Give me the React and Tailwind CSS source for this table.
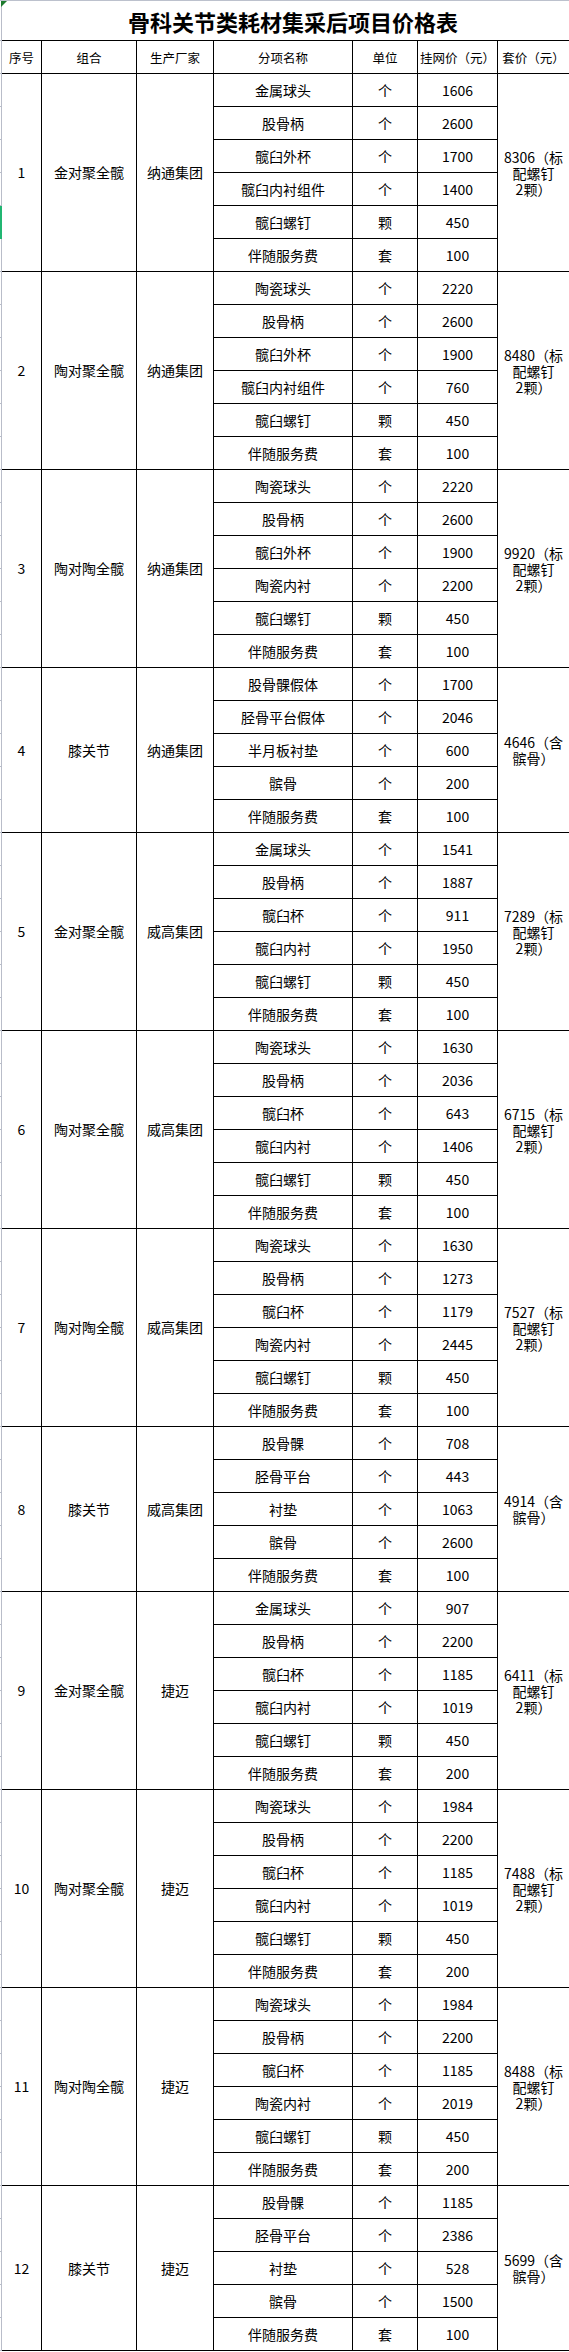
import React from 'react';

const groups = [
  {
    no: '1', combo: '金对聚全髋', maker: '纳通集团', total: ['8306（标', '配螺钉', '2颗）'],
    items: [['金属球头', '个', '1606'], ['股骨柄', '个', '2600'], ['髋臼外杯', '个', '1700'], ['髋臼内衬组件', '个', '1400'], ['髋臼螺钉', '颗', '450'], ['伴随服务费', '套', '100']],
  },
  {
    no: '2', combo: '陶对聚全髋', maker: '纳通集团', total: ['8480（标', '配螺钉', '2颗）'],
    items: [['陶瓷球头', '个', '2220'], ['股骨柄', '个', '2600'], ['髋臼外杯', '个', '1900'], ['髋臼内衬组件', '个', '760'], ['髋臼螺钉', '颗', '450'], ['伴随服务费', '套', '100']],
  },
  {
    no: '3', combo: '陶对陶全髋', maker: '纳通集团', total: ['9920（标', '配螺钉', '2颗）'],
    items: [['陶瓷球头', '个', '2220'], ['股骨柄', '个', '2600'], ['髋臼外杯', '个', '1900'], ['陶瓷内衬', '个', '2200'], ['髋臼螺钉', '颗', '450'], ['伴随服务费', '套', '100']],
  },
  {
    no: '4', combo: '膝关节', maker: '纳通集团', total: ['4646（含', '髌骨）'],
    items: [['股骨髁假体', '个', '1700'], ['胫骨平台假体', '个', '2046'], ['半月板衬垫', '个', '600'], ['髌骨', '个', '200'], ['伴随服务费', '套', '100']],
  },
  {
    no: '5', combo: '金对聚全髋', maker: '威高集团', total: ['7289（标', '配螺钉', '2颗）'],
    items: [['金属球头', '个', '1541'], ['股骨柄', '个', '1887'], ['髋臼杯', '个', '911'], ['髋臼内衬', '个', '1950'], ['髋臼螺钉', '颗', '450'], ['伴随服务费', '套', '100']],
  },
  {
    no: '6', combo: '陶对聚全髋', maker: '威高集团', total: ['6715（标', '配螺钉', '2颗）'],
    items: [['陶瓷球头', '个', '1630'], ['股骨柄', '个', '2036'], ['髋臼杯', '个', '643'], ['髋臼内衬', '个', '1406'], ['髋臼螺钉', '颗', '450'], ['伴随服务费', '套', '100']],
  },
  {
    no: '7', combo: '陶对陶全髋', maker: '威高集团', total: ['7527（标', '配螺钉', '2颗）'],
    items: [['陶瓷球头', '个', '1630'], ['股骨柄', '个', '1273'], ['髋臼杯', '个', '1179'], ['陶瓷内衬', '个', '2445'], ['髋臼螺钉', '颗', '450'], ['伴随服务费', '套', '100']],
  },
  {
    no: '8', combo: '膝关节', maker: '威高集团', total: ['4914（含', '髌骨）'],
    items: [['股骨髁', '个', '708'], ['胫骨平台', '个', '443'], ['衬垫', '个', '1063'], ['髌骨', '个', '2600'], ['伴随服务费', '套', '100']],
  },
  {
    no: '9', combo: '金对聚全髋', maker: '捷迈', total: ['6411（标', '配螺钉', '2颗）'],
    items: [['金属球头', '个', '907'], ['股骨柄', '个', '2200'], ['髋臼杯', '个', '1185'], ['髋臼内衬', '个', '1019'], ['髋臼螺钉', '颗', '450'], ['伴随服务费', '套', '200']],
  },
  {
    no: '10', combo: '陶对聚全髋', maker: '捷迈', total: ['7488（标', '配螺钉', '2颗）'],
    items: [['陶瓷球头', '个', '1984'], ['股骨柄', '个', '2200'], ['髋臼杯', '个', '1185'], ['髋臼内衬', '个', '1019'], ['髋臼螺钉', '颗', '450'], ['伴随服务费', '套', '200']],
  },
  {
    no: '11', combo: '陶对陶全髋', maker: '捷迈', total: ['8488（标', '配螺钉', '2颗）'],
    items: [['陶瓷球头', '个', '1984'], ['股骨柄', '个', '2200'], ['髋臼杯', '个', '1185'], ['陶瓷内衬', '个', '2019'], ['髋臼螺钉', '颗', '450'], ['伴随服务费', '套', '200']],
  },
  {
    no: '12', combo: '膝关节', maker: '捷迈', total: ['5699（含', '髌骨）'],
    items: [['股骨髁', '个', '1185'], ['胫骨平台', '个', '2386'], ['衬垫', '个', '528'], ['髌骨', '个', '1500'], ['伴随服务费', '套', '100']],
  },
];

const headers = ['序号', '组合', '生产厂家', '分项名称', '单位', '挂网价（元）', '套价（元）'];

const cell = 'bg-white flex items-center justify-center text-center';

export default function App() {
  const rowCount = groups.reduce((n, g) => n + g.items.length, 0);

  return (
    <div
      className="relative w-[569px] h-[2352px] bg-white border-t border-[#bcc1cd] text-black"
      style={{ fontFamily: '"Noto Sans CJK SC", sans-serif' }}
    >
      {/* excel corner marker */}
      <svg className="absolute left-px top-0 w-[6px] h-[6px]" viewBox="0 0 6 6">
        <polygon points="0,0 6,0 0,6" fill="#1d7a2e" />
      </svg>

      <div className="flex">
        {/* row-header gutter */}
        <div className="w-[2px] flex flex-col">
          <div className="h-[40px] border-r border-b border-[#b9bdc9]" />
          <div className="h-[33px] border-r border-b border-[#b9bdc9]" />
          {Array.from({ length: rowCount }).map((_, i) => (
            <div
              key={i}
              className={
                i === 4
                  ? 'h-[33px] bg-[#21b672] border-b border-[#21b672]'
                  : 'h-[33px] border-r border-b border-[#b9bdc9]'
              }
            />
          ))}
        </div>

        <div className="flex-1">
          <div className="h-[39px] flex items-center justify-center pl-[15px] text-[22px] font-bold leading-none">
            骨科关节类耗材集采后项目价格表
          </div>

          <div className="grid grid-cols-[39px_94px_76px_138px_64px_79px_71px] auto-rows-[32px] gap-px bg-black py-px">
            {headers.map((h) => (
              <div key={h} className={`${cell} text-[12.5px] pt-[2px]`}>
                {h}
              </div>
            ))}

            {groups.map((g) => {
              const span = g.items.length === 6 ? 'row-span-6' : 'row-span-5';
              return (
                <React.Fragment key={g.no}>
                  <div className={`${cell} ${span} text-[14px]`}>{g.no}</div>
                  <div className={`${cell} ${span} text-[14px]`}>{g.combo}</div>
                  <div className={`${cell} ${span} text-[14px]`}>{g.maker}</div>
                  <div className={`${cell} text-[14px] pt-px`}>{g.items[0][0]}</div>
                  <div className={`${cell} text-[14px] pt-px`}>{g.items[0][1]}</div>
                  <div className={`${cell} text-[14px] pt-px`}>{g.items[0][2]}</div>
                  <div className={`${cell} ${span} flex-col px-[6px] text-[14px] leading-[16px]`}>
                    {g.total.map((t) => (
                      <span key={t} className="whitespace-nowrap">{t}</span>
                    ))}
                  </div>
                  {g.items.slice(1).map((it, i) => (
                    <React.Fragment key={i}>
                      <div className={`${cell} text-[14px] pt-px`}>{it[0]}</div>
                      <div className={`${cell} text-[14px] pt-px`}>{it[1]}</div>
                      <div className={`${cell} text-[14px] pt-px`}>{it[2]}</div>
                    </React.Fragment>
                  ))}
                </React.Fragment>
              );
            })}
          </div>
        </div>
      </div>
    </div>
  );
}
